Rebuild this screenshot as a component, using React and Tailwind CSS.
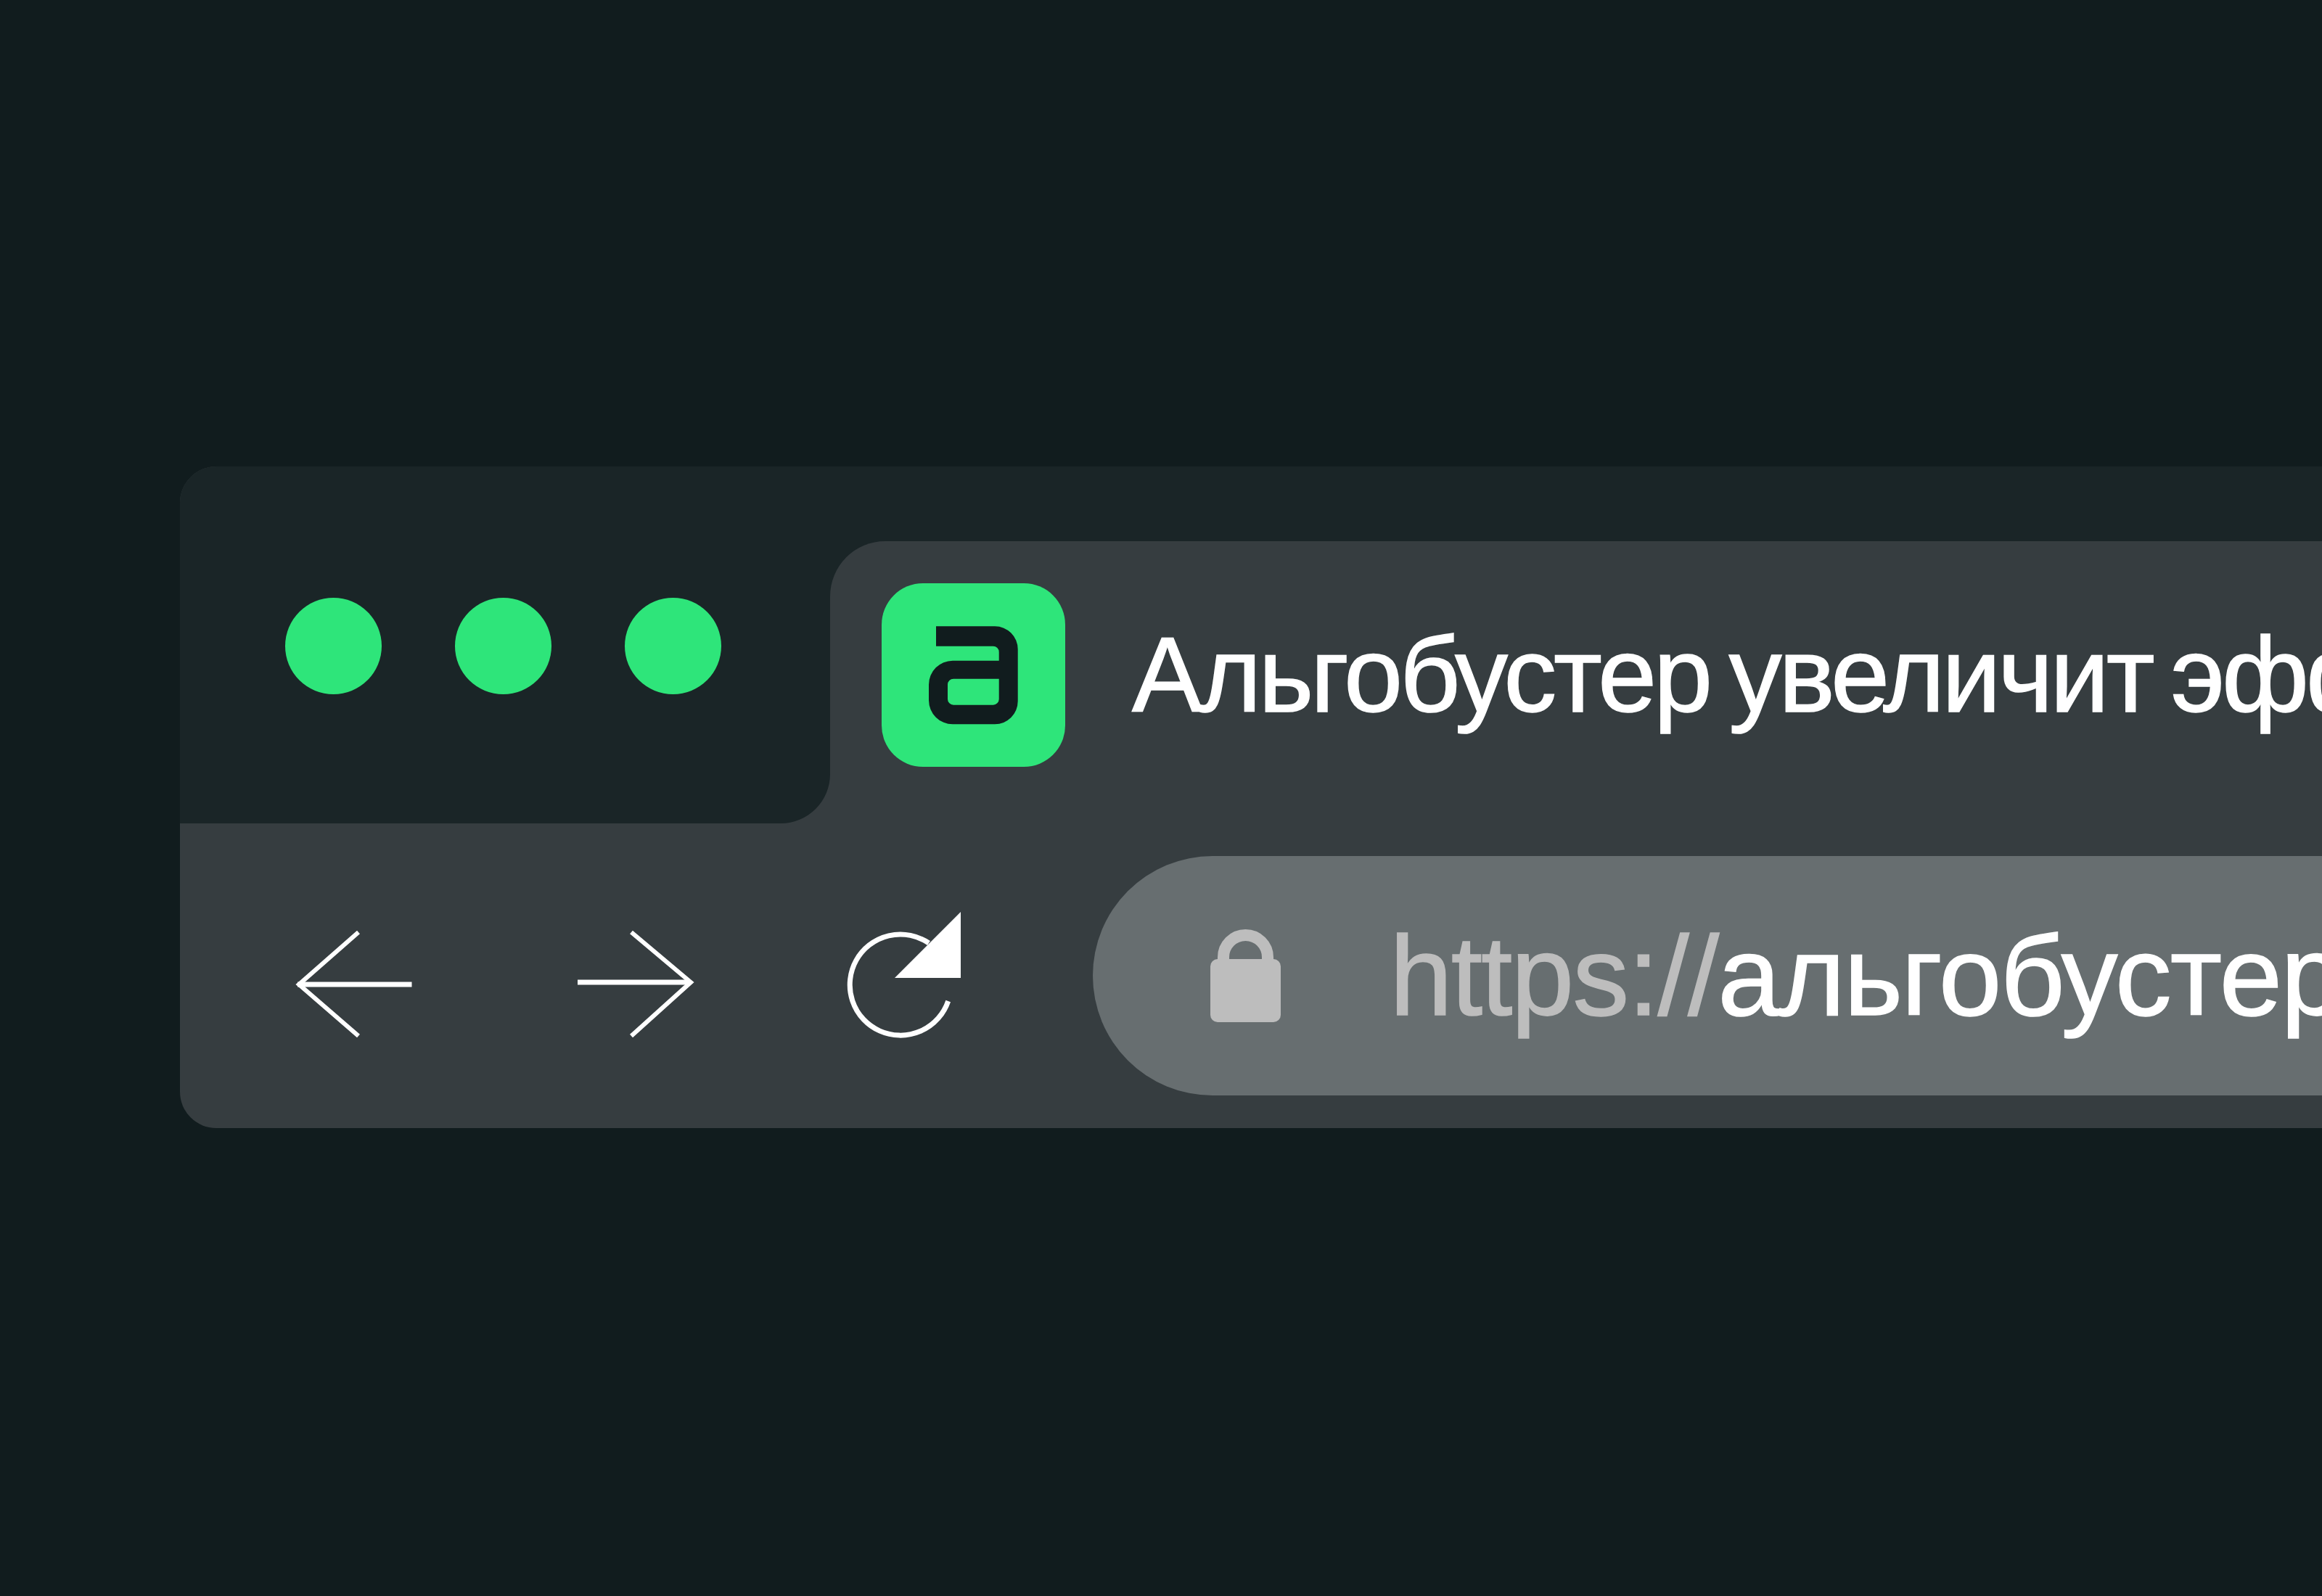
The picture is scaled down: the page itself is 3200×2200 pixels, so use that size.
import React from 'react';

function BackIcon() {
  return (
    <svg width="176" height="190" viewBox="0 0 176 190" fill="none" stroke="white" className="shrink-0">
      <path d="M10 107H167.5" strokeWidth="7" />
      <path d="M94 35L12 107L94 178" strokeWidth="6" />
    </svg>
  );
}

function ForwardIcon() {
  return (
    <svg width="176" height="190" viewBox="0 0 176 190" fill="none" stroke="white" className="shrink-0">
      <path d="M8 104H162" strokeWidth="7" />
      <path d="M82 35L164 104L82 178" strokeWidth="6" />
    </svg>
  );
}

function ReloadIcon() {
  return (
    <svg width="170" height="190" viewBox="0 0 170 190" fill="none" className="shrink-0">
      <path d="M146.7 130A69.6 69.6 0 1 1 120 50" stroke="white" strokeWidth="7" />
      <path d="M164 7V98H73Z" fill="white" />
    </svg>
  );
}

function LockIcon() {
  return (
    <svg width="97" height="128" viewBox="0 0 97 128" fill="none" className="shrink-0">
      <path d="M18 42V38.5A30.5 30.5 0 0 1 79 38.5V42" stroke="#bdbdbd" strokeWidth="16" />
      <rect x="0" y="41" width="97" height="87" rx="10" fill="#bdbdbd" />
    </svg>
  );
}

function Logo() {
  return (
    <div className="w-[253px] h-[253px] shrink-0 rounded-[57px] bg-[#2ee57a]">
      <svg width="253" height="253" viewBox="0 0 253 253">
        <path
          fill="#111c1e"
          fillRule="evenodd"
          d="M75 59.3H156A31.7 31.7 0 0 1 187.7 91V162.6A31.7 31.7 0 0 1 156 194.3H98A33 33 0 0 1 65 161.3V139.7A33 33 0 0 1 98 106.7H161.7V94.7A8 8 0 0 0 153.7 86.7H75ZM99 131.7A8 8 0 0 0 91 139.7V159.7A8 8 0 0 0 99 167.7H153.7A8 8 0 0 0 161.7 159.7V131.7Z"
        />
      </svg>
    </div>
  );
}

export default function App() {
  return (
    <div className="w-[3200px] h-[2200px] overflow-hidden bg-[#111c1e] pl-[248px] pt-[643px] font-['Liberation_Sans',sans-serif]">
      <div className="h-[912px] rounded-l-[50px] overflow-hidden bg-[#363d40] flex flex-col">
        <div className="flex h-[492px] shrink-0">
          <div className="w-[896px] shrink-0 rounded-br-[68px] bg-[#1a2527] pl-[145px] pt-[181px] flex gap-[101px] items-start">
            <div className="w-[133px] h-[133px] rounded-full bg-[#2ee57a]" />
            <div className="w-[133px] h-[133px] rounded-full bg-[#2ee57a]" />
            <div className="w-[133px] h-[133px] rounded-full bg-[#2ee57a]" />
          </div>
          <div className="flex-1 min-w-0 bg-[#1a2527] pt-[103px]">
            <div className="h-full rounded-tl-[76px] bg-[#363d40] pl-[71px] pt-[58px] flex items-start gap-[92px]">
              <Logo />
              <span className="whitespace-nowrap text-white text-[146px] leading-[146px] tracking-[-4.2px] [word-spacing:-10px] [-webkit-text-stroke-width:1.5px] mt-[54px]">
                Альгобустер увеличит эффективность
              </span>
            </div>
          </div>
        </div>
        <div className="flex-1 flex items-center pl-[152px]">
          <BackIcon />
          <div className="ml-[212px]"><ForwardIcon /></div>
          <div className="ml-[196px]"><ReloadIcon /></div>
          <div className="ml-[176px] flex-1 min-w-0 h-[330px] rounded-l-[165px] bg-[#676e70] pl-[162px] flex items-center gap-[150px] overflow-hidden">
            <LockIcon />
            <span className="whitespace-nowrap text-[#bdbdbd] text-[156px] leading-[156px] tracking-[-2px] [-webkit-text-stroke-width:1.5px]">
              https://<span className="text-white">альгобустер.рф</span>
            </span>
          </div>
        </div>
      </div>
    </div>
  );
}
